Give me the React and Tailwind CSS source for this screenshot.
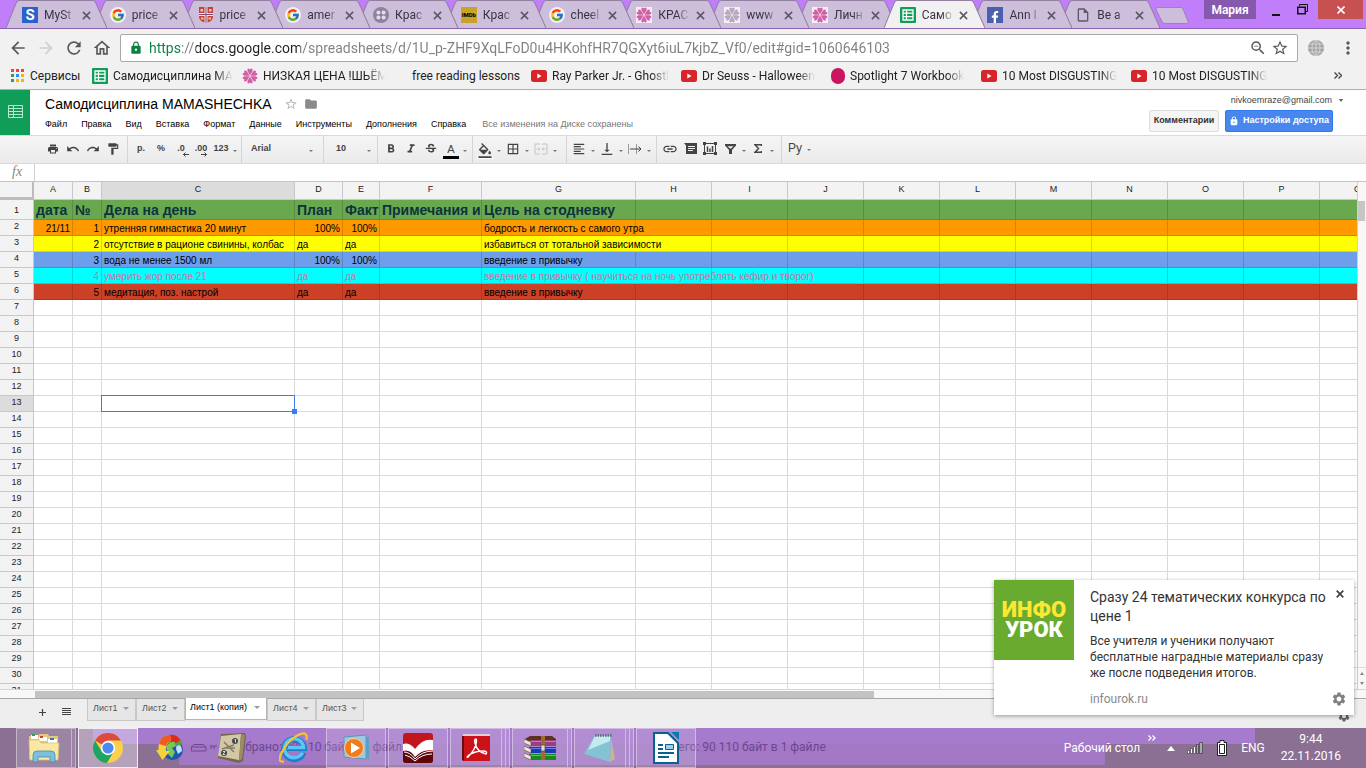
import React from 'react';
import clsx from 'clsx';
import { FcGoogle } from 'react-icons/fc';
import { FaFacebookF } from 'react-icons/fa';
import {
  MdArrowBack,
  MdArrowForward,
  MdBorderAll,
  MdFolder,
  MdFormatAlignLeft,
  MdFormatBold,
  MdFormatColorFill,
  MdFormatItalic,
  MdFormatPaint,
  MdLink,
  MdLock,
  MdMoreVert,
  MdOutlineHome,
  MdOutlineInsertDriveFile,
  MdPrint,
  MdRedo,
  MdRefresh,
  MdSettings,
  MdStarBorder,
  MdStrikethroughS,
  MdUndo,
  MdVerticalAlignBottom,
  MdZoomOut,
} from 'react-icons/md';

const uiFont = "font-['Roboto','Noto_Sans',sans-serif]";
const docFont = "font-['Liberation_Sans',Arial,sans-serif]";
const fade = '[mask-image:linear-gradient(to_right,black_60%,transparent)]';

function SheetsIcon() {
  return (
    <svg viewBox="0 0 16 16" className="size-4 shrink-0">
      <rect width="16" height="16" rx="1" fill="#0f9d58" />
      <path d="M3 3h10v10H3z M3.5 6.2h9 M3.5 9.6h9 M6.5 3.5v9" fill="none" stroke="#fff" strokeWidth="1.3" />
    </svg>
  );
}

function FlowerIcon({ color = '#d15fa5' }) {
  return (
    <svg viewBox="0 0 16 16" className="size-4 shrink-0">
      <rect width="16" height="16" fill="#f6eef6" />
      <g fill={color}>
        {[0, 60, 120, 180, 240, 300].map((angle) => (
          <path
            key={angle}
            d="M8 7.500 5.600 3.200Q4.800.6 6.700.4L8 1.600 9.300.4q1.900.2 1.100 2.800z"
            transform={`rotate(${angle} 8 8)`}
          />
        ))}
      </g>
    </svg>
  );
}

function YoutubeIcon() {
  return (
    <svg viewBox="0 0 16 12" className="h-3 w-4 shrink-0">
      <rect width="16" height="12" rx="2.500" fill="#d9252a" />
      <path d="M6.300 3.500 10.500 6l-4.200 2.500z" fill="#fff" />
    </svg>
  );
}

function SerpIcon() {
  return (
    <span className="flex size-4 shrink-0 items-center justify-center bg-[#2a62c9] text-[15px] font-bold leading-4 text-white">
      S
    </span>
  );
}

function CrestIcon() {
  return (
    <svg viewBox="0 0 16 16" className="size-4 shrink-0">
      <path d="M1 0h14v9c0 4-3 6-7 7-4-1-7-3-7-7z" fill="#c9403a" />
      <path d="M6.500 0h3v16h-3zM1 6h14v3H1z" fill="#f3e3dc" />
      <path d="M2.500 2h2.500v2.500H2.500zM11 2h2.500v2.500H11zM3 10.500h2.500v2H3zM10.500 10.500H13v2h-2.500z" fill="#f0c8b0" />
      <path d="M8 0v16M1 7.500h14" stroke="#7f4a7d" />
    </svg>
  );
}

function ReelIcon() {
  return (
    <svg viewBox="0 0 16 16" className="size-4 shrink-0">
      <circle cx="8" cy="8" r="8" fill="#8e82a0" />
      <g fill="#e5dcec">
        <circle cx="5.400" cy="5.400" r="2" />
        <circle cx="10.600" cy="5.400" r="2" />
        <circle cx="5.400" cy="10.600" r="2" />
        <circle cx="10.600" cy="10.600" r="2" />
      </g>
    </svg>
  );
}

function ImdbIcon() {
  return (
    <span className="flex size-4 shrink-0 items-center justify-center bg-[#c9a227] text-[6px] font-extrabold leading-4 text-black">
      IMDb
    </span>
  );
}

function GoogleIcon() {
  return (
    <span className="flex size-4 shrink-0 items-center justify-center rounded-full bg-[#f3eef8]">
      <FcGoogle className="size-3.5" />
    </span>
  );
}

function FacebookIcon() {
  return (
    <span className="flex size-4 shrink-0 items-end justify-end overflow-hidden bg-[#4a5fae] pr-0.5">
      <FaFacebookF className="size-3 text-white" />
    </span>
  );
}

const BROWSER_TABS = [
  { title: 'MySt', icon: <SerpIcon /> },
  { title: 'price', icon: <GoogleIcon /> },
  { title: 'price', icon: <CrestIcon /> },
  { title: 'amer', icon: <GoogleIcon /> },
  { title: 'Крас', icon: <ReelIcon /> },
  { title: 'Крас', icon: <ImdbIcon /> },
  { title: 'cheel', icon: <GoogleIcon /> },
  { title: 'КРАС', icon: <FlowerIcon /> },
  { title: 'www', icon: <FlowerIcon color="#b5a8bd" /> },
  { title: 'Личн', icon: <FlowerIcon /> },
  { title: 'Само', icon: <SheetsIcon />, active: true },
  { title: 'Ann I', icon: <FacebookIcon /> },
  { title: 'Be a', icon: <MdOutlineInsertDriveFile className="size-4 shrink-0 text-[#5f5866]" /> },
];

const TAB_LAYERS = ['z-[13]', 'z-[12]', 'z-[11]', 'z-[10]', 'z-[9]', 'z-[8]', 'z-[7]', 'z-[6]', 'z-[5]', 'z-[4]', 'z-20', 'z-[2]', 'z-[1]'];

function BrowserTab({ tab, layer }) {
  return (
    <div className={clsx('relative h-7 min-w-0 flex-1', layer)}>
      <svg viewBox="0 0 100 28" preserveAspectRatio="none" className="absolute left-0 top-0 h-7 w-[101px]">
        <path
          d="M0 28 10 3Q11 .5 13 .5H86Q88 .5 89 3L100 28"
          fill={tab.active ? '#f2f1f2' : '#cdbedb'}
          stroke="#93809f"
        />
      </svg>
      <div className="relative flex h-7 items-center pl-4 pt-0.5">
        {tab.icon}
        <span className={clsx('ml-1.5 w-8 overflow-hidden whitespace-nowrap text-xs leading-4 text-[#3a3342]', fade)}>
          {tab.title}
        </span>
        <button type="button" aria-label={`Закрыть ${tab.title}`} className="ml-1 flex size-3 items-center justify-center">
          <svg viewBox="0 0 10 10" className="size-[9px]">
            <path d="M1 1l8 8M9 1 1 9" stroke="#5d5666" strokeWidth="1.700" />
          </svg>
        </button>
      </div>
    </div>
  );
}

function TabStrip() {
  return (
    <div className="flex h-[29px] shrink-0 justify-between border-b border-[#8a62ab] bg-[#c17efb]">
      <div className="flex pl-1.5">
        <div className="flex w-[1141px]">
          {BROWSER_TABS.map((tab, i) => (
            <BrowserTab key={i} tab={tab} layer={TAB_LAYERS[i]} />
          ))}
        </div>
        <button type="button" aria-label="Новая вкладка" className="ml-2 flex w-9 shrink-0 items-start pt-[7px]">
          <svg viewBox="0 0 34 17" className="h-[17px] w-[34px]">
            <path d="M3 .5h23q1.500 0 2 1.500l5 12.500q.5 2-1.500 2H10q-2 0-3-2L1 2.500Q.5.5 3 .5z" fill="#cdbedb" stroke="#9d85b2" />
          </svg>
        </button>
      </div>
      <div className="flex h-[19px] items-stretch">
        <button type="button" className="mr-1.5 w-[52px] bg-[#8759ae] text-xs font-semibold leading-[18px] text-white">
          Мария
        </button>
        <button type="button" aria-label="Свернуть" className="flex w-7 items-center justify-center">
          <svg viewBox="0 0 8 12" className="mt-1 h-3 w-2"><path d="M0 9h8" stroke="#111" strokeWidth="2" /></svg>
        </button>
        <button type="button" aria-label="Развернуть" className="flex w-6 items-center justify-center">
          <svg viewBox="0 0 11 11" className="size-[11px]">
            <path d="M2.500 2V.5h8v7H9" fill="none" stroke="#111" />
            <path d="M.75 3.250h7.500v6.500H.75z" fill="none" stroke="#111" strokeWidth="1.500" />
          </svg>
        </button>
        <button type="button" aria-label="Закрыть" className="ml-1 mr-[3px] flex w-[45px] items-center justify-center bg-[#c75050]">
          <svg viewBox="0 0 8 8" className="size-2"><path d="M.5.5l7 7M7.500.5l-7 7" stroke="#fff" strokeWidth="1.600" /></svg>
        </button>
      </div>
    </div>
  );
}

function AddressBar() {
  return (
    <div className="flex h-[33px] shrink-0 items-end bg-[#f2f1f2] pl-2 text-[#595959]">
      <div className="flex h-7 w-28 items-center gap-2">
        <button type="button" aria-label="Назад"><MdArrowBack className="size-5" /></button>
        <button type="button" aria-label="Вперёд"><MdArrowForward className="size-5 text-[#d0d0d0]" /></button>
        <button type="button" aria-label="Обновить"><MdRefresh className="size-5" /></button>
        <button type="button" aria-label="Главная"><MdOutlineHome className="size-5" /></button>
      </div>
      <div className="flex h-7 min-w-0 flex-1 items-center rounded-xs border border-[#a9a9a9] bg-white px-2">
        <MdLock className="size-3.5 shrink-0 text-[#0b8043]" />
        <input
          aria-label="Адресная строка"
          defaultValue="https://docs.google.com/spreadsheets/d/1U_p-ZHF9XqLFoD0u4HKohfHR7QGXyt6iuL7kjbZ_Vf0/edit#gid=1060646103"
          className="ml-1.5 min-w-0 flex-1 bg-[linear-gradient(to_right,#0b8043_32px,#808080_32px,#808080_47px,#222_47px,#222_151px,#808080_151px)] bg-clip-text text-sm text-transparent outline-none"
        />
        <button type="button" aria-label="Масштаб"><MdZoomOut className="size-[18px]" /></button>
        <button type="button" aria-label="В закладки" className="ml-1"><MdStarBorder className="size-[18px]" /></button>
      </div>
      <button type="button" aria-label="Расширение" className="ml-2.5 flex h-7 items-center">
        <svg viewBox="0 0 16 16" className="size-4">
          <circle cx="8" cy="8" r="8" fill="#a3a3a3" />
          <path d="M8 0v16M0 8h16M1.500 4h13M1.500 12h13" stroke="#d5d5d5" fill="none" />
          <ellipse cx="8" cy="8" rx="4" ry="7.500" stroke="#d5d5d5" fill="none" />
        </svg>
      </button>
      <button type="button" aria-label="Меню" className="ml-3.5 mr-2 flex h-7 items-center"><MdMoreVert className="size-5" /></button>
    </div>
  );
}

function AppsIcon() {
  const colors = ['#e8453c', '#e8453c', '#e8453c', '#2c9f5a', '#2f8ef0', '#f5b400', '#2c9f5a', '#f5b400', '#f5b400'];
  return (
    <svg viewBox="0 0 13 13" className="mx-px size-[13px] shrink-0">
      {colors.map((color, i) => (
        <rect key={i} x={(i % 3) * 5} y={Math.floor(i / 3) * 5} width="3" height="3" fill={color} />
      ))}
    </svg>
  );
}

const BOOKMARKS = [
  { label: 'Сервисы', width: 'w-[82px]', icon: <AppsIcon /> },
  { label: 'Самодисциплина MA', width: 'w-[150px]', icon: <SheetsIcon />, long: true },
  { label: 'НИЗКАЯ ЦЕНА !ШЬЁМ', width: 'w-[151px]', icon: <FlowerIcon />, long: true },
  { label: 'free reading lessons', width: 'w-[138px]', icon: <span className="w-3.5 shrink-0" /> },
  { label: 'Ray Parker Jr. - Ghostl', width: 'w-[150px]', icon: <YoutubeIcon />, long: true },
  { label: 'Dr Seuss - Halloween', width: 'w-[150px]', icon: <YoutubeIcon />, long: true },
  { label: 'Spotlight 7 Workbook', width: 'w-[150px]', icon: <span className="h-4 w-3.5 shrink-0 rounded-full bg-[#c9165f]" />, long: true },
  { label: '10 Most DISGUSTING', width: 'w-[150px]', icon: <YoutubeIcon />, long: true },
  { label: '10 Most DISGUSTING', width: 'w-[150px]', icon: <YoutubeIcon />, long: true },
];

function BookmarksBar() {
  return (
    <nav className="flex h-7 shrink-0 items-center border-b border-[#b0afb0] bg-[#f2f1f2] pl-2.5 text-xs text-[#222]">
      {BOOKMARKS.map((item, i) => (
        <a key={i} href="#" className={clsx('flex shrink-0 items-center gap-[5px] pr-2', item.width)}>
          {item.icon}
          <span
            className={clsx(
              'overflow-hidden whitespace-nowrap',
              item.long && '[mask-image:linear-gradient(to_right,black_85%,transparent)]',
            )}
          >
            {item.label}
          </span>
        </a>
      ))}
      <button type="button" aria-label="Другие закладки" className="ml-auto mr-6">
        <svg viewBox="0 0 8 7" className="h-[7px] w-2">
          <path d="M.5.5l3 3-3 3M4.500.5l3 3-3 3" fill="none" stroke="#444" strokeWidth="1.400" />
        </svg>
      </button>
    </nav>
  );
}

const DOC_MENU = ['Файл', 'Правка', 'Вид', 'Вставка', 'Формат', 'Данные', 'Инструменты', 'Дополнения', 'Справка'];

function DocHeader() {
  return (
    <header className="flex h-[45px] shrink-0 bg-white">
      <a href="#" aria-label="Таблицы" className="flex w-[30px] justify-center bg-[#0f9d58] pt-[15px]">
        <svg viewBox="0 0 15 13" className="h-[13px] w-[15px]">
          <path d="M.5.5h14v12H.5zM.5 3.500h14M.5 6.500h14M.5 9.500h14M5.500.5v12" fill="none" stroke="#bfe5d0" />
        </svg>
      </a>
      <div className="flex-1 pl-[15px] pt-[5px]">
        <div className="flex h-[18px] items-center">
          <h1 className="text-sm leading-4 text-black">Самодисциплина MAMASHECHKA</h1>
          <button type="button" aria-label="Пометить" className="ml-3"><MdStarBorder className="size-3.5 text-[#b8b8b8]" /></button>
          <button type="button" aria-label="Папка" className="ml-1.5"><MdFolder className="size-3.5 text-[#8a8a8a]" /></button>
        </div>
        <div className="mt-[5px] flex items-center text-[9px] leading-3 text-black">
          <nav className="flex gap-3.5">
            {DOC_MENU.map((label) => <button key={label} type="button">{label}</button>)}
          </nav>
          <span className="ml-4 text-[#777]">Все изменения на Диске сохранены</span>
        </div>
      </div>
      <div className="pr-[22px] text-[9px]">
        <button type="button" className="ml-auto flex h-5 items-center gap-1.5 leading-3 text-[#444]">
          nivkoemraze@gmail.com
          <svg viewBox="0 0 6 4" className="h-[3px] w-1.5"><path d="M0 0h6L3 4z" fill="#666" /></svg>
        </button>
        <div className="mr-[11px] flex gap-1.5 font-bold">
          <button type="button" className="h-[22px] w-[70px] whitespace-nowrap rounded-xs border border-[#dcdcdc] bg-[#f5f5f5] text-[#333]">
            Комментарии
          </button>
          <button type="button" className="flex h-[22px] w-[108px] items-center justify-center gap-1 whitespace-nowrap rounded-xs border border-[#3079ed] bg-[#4887ef] text-white">
            <MdLock className="size-[10px]" />
            Настройки доступа
          </button>
        </div>
      </div>
    </header>
  );
}

function Caret() {
  return (
    <span className="flex w-2 shrink-0 justify-center pt-1">
      <svg viewBox="0 0 4 2" className="h-0.5 w-1"><path d="M0 0h4L2 2z" fill="#777" /></svg>
    </span>
  );
}

function Tool({ label, caret, faded, children }) {
  return (
    <button
      type="button"
      aria-label={label}
      className={clsx('flex h-full shrink-0 items-center', faded ? 'text-[#c4c4c4]' : 'text-[#444]')}
    >
      <span className="flex w-5 items-center justify-center">{children}</span>
      {caret && <Caret />}
    </button>
  );
}

function ToolGroup({ className, children }) {
  return <div className={clsx('flex h-full shrink-0 items-center border-r border-[#d5d5d5] pb-0.5', className)}>{children}</div>;
}

function Toolbar() {
  return (
    <div className="flex h-[29px] shrink-0 items-center border-y border-[#dadada] bg-[linear-gradient(to_bottom,#f5f5f5,#ebebeb)] text-[9px] font-bold text-[#444]">
      <ToolGroup className="w-32 pl-[43px]">
        <Tool label="Печать"><MdPrint className="size-3" /></Tool>
        <Tool label="Отменить"><MdUndo className="size-3.5" /></Tool>
        <Tool label="Повторить"><MdRedo className="size-3.5" /></Tool>
        <Tool label="Копировать форматирование"><MdFormatPaint className="size-3.5" /></Tool>
      </ToolGroup>
      <ToolGroup className="w-[114px] pl-[3px]">
        <Tool label="Денежный формат">р.</Tool>
        <Tool label="Процентный формат">%</Tool>
        <Tool label="Меньше знаков">
          <span className="relative">.0
            <svg viewBox="0 0 6 5" className="absolute -right-1 top-2.5 h-[5px] w-1.5"><path d="M0 2.500h6M2.500.5l-2 2 2 2" stroke="#444" fill="none" /></svg>
          </span>
        </Tool>
        <Tool label="Больше знаков">
          <span className="relative">.00
            <svg viewBox="0 0 6 5" className="absolute right-0 top-2.5 h-[5px] w-1.5"><path d="M0 2.500h6M3.500.5l2 2-2 2" stroke="#444" fill="none" /></svg>
          </span>
        </Tool>
        <Tool label="Другие форматы" caret>123</Tool>
      </ToolGroup>
      <ToolGroup className="w-[82px] pl-[9px] pr-2">
        <select aria-label="Шрифт" className="h-full flex-1 appearance-none outline-none"><option>Arial</option></select>
        <Caret />
      </ToolGroup>
      <ToolGroup className="w-[54px] pl-3 pr-1">
        <select aria-label="Размер шрифта" className="h-full flex-1 appearance-none outline-none"><option>10</option></select>
        <Caret />
      </ToolGroup>
      <ToolGroup className="w-[95px] pl-[3px]">
        <Tool label="Полужирный"><MdFormatBold className="size-3.5" /></Tool>
        <Tool label="Курсив"><MdFormatItalic className="size-3.5" /></Tool>
        <Tool label="Зачеркнутый"><MdStrikethroughS className="size-3.5" /></Tool>
        <Tool label="Цвет текста" caret>
          <span className="mt-1 w-4 border-b-3 border-black text-[11px] font-normal leading-[14px]">A</span>
        </Tool>
      </ToolGroup>
      <ToolGroup className="w-[94px] pl-0.5">
        <Tool label="Цвет заливки" caret>
          <span className="mt-1 border-b-3 border-white"><MdFormatColorFill className="-mb-0.5 size-4" viewBox="0 0 24 21" /></span>
        </Tool>
        <Tool label="Границы" caret><MdBorderAll className="size-3.5" /></Tool>
        <Tool label="Объединить ячейки" caret faded>
          <svg viewBox="0 0 14 12" className="h-3 w-3.5">
            <path d="M6 1H1v10h5M8 1h5v10H8M2.500 6H6M4.500 4.500 6 6 4.500 7.500M11.500 6H8M9.500 4.500 8 6l1.500 1.500" fill="none" stroke="currentColor" />
          </svg>
        </Tool>
      </ToolGroup>
      <ToolGroup className="w-[90px] pl-0.5">
        <Tool label="Выравнивание" caret><MdFormatAlignLeft className="size-3.5" /></Tool>
        <Tool label="Вертикальное выравнивание" caret><MdVerticalAlignBottom className="size-4" /></Tool>
        <Tool label="Перенос текста" caret>
          <svg viewBox="0 0 14 10" className="h-2.5 w-3.5">
            <path d="M.5 0v10M8.500 0v10" stroke="#999" />
            <path d="M2 5h11M10.500 2.500 13 5l-2.500 2.500" fill="none" stroke="#444" />
          </svg>
        </Tool>
      </ToolGroup>
      <ToolGroup className="w-[125px] pl-[3px]">
        <Tool label="Вставить ссылку"><MdLink className="size-4" /></Tool>
        <Tool label="Комментарий">
          <svg viewBox="0 0 13 11" className="h-[11px] w-[13px]">
            <path d="M0 0h13v11H2V2.500z" fill="#444" />
            <path d="M4 3.500h7M4 5.500h7M4 7.500h5" stroke="#f0f0f0" />
          </svg>
        </Tool>
        <Tool label="Диаграмма">
          <svg viewBox="0 0 14 13" className="h-[13px] w-3.5">
            <path d="M1.500 1.500h11v10h-11z" fill="none" stroke="#444" />
            <path d="M0 0h3v3H0zM11 0h3v3h-3zM0 10h3v3H0zM11 10h3v3h-3z" fill="#444" />
            <path d="M4.500 4.500v5.500M7 6.500v3.500M9.500 4v6" stroke="#444" strokeWidth="1.500" />
          </svg>
        </Tool>
        <Tool label="Фильтр" caret>
          <svg viewBox="0 0 11 10" className="h-2.5 w-[11px]">
            <path d="M0 0h11v1.500L7 6v4H4V6L0 1.500zM2.500 2.300h6L6 4.500H5z" fill="#444" fillRule="evenodd" />
          </svg>
        </Tool>
        <Tool label="Функции" caret>
          <svg viewBox="0 0 8 9" className="h-[9px] w-2">
            <path d="M7.500 2V.8H1L4.500 4.500 1 8.200h6.500V7" fill="none" stroke="#444" strokeWidth="1.500" />
          </svg>
        </Tool>
      </ToolGroup>
      <div className="flex h-full items-center pb-1 pl-[3px]">
        <button type="button" aria-label="Способ ввода" className="flex h-full items-center text-xs font-normal">
          <span className="w-5 text-center">Ру</span>
          <Caret />
        </button>
      </div>
    </div>
  );
}

function FormulaBar() {
  return (
    <div className="flex h-[18px] shrink-0 border-b border-[#c4c4c4] bg-white">
      <label htmlFor="formula" className="w-[35px] border-r border-[#d0d0d0] pl-3 font-['Liberation_Serif',serif] text-sm italic leading-4 text-[#888]">
        fx
      </label>
      <input id="formula" className="min-w-0 flex-1 px-1 text-[10px] outline-none" />
    </div>
  );
}

const COLUMNS = [
  { name: 'A', width: 'w-[39px]' },
  { name: 'B', width: 'w-[29px]' },
  { name: 'C', width: 'w-[193px]' },
  { name: 'D', width: 'w-12' },
  { name: 'E', width: 'w-[37px]' },
  { name: 'F', width: 'w-[102px]' },
  { name: 'G', width: 'w-[154px]' },
  ...'HIJKLMNOPQ'.split('').map((name) => ({ name, width: 'w-[76px]' })),
];

const ROWS = {
  1: {
    style: 'bg-[#6aa84f] text-[#0c343d] text-sm font-bold leading-[18px]',
    cells: ['дата', '№', 'Дела на день', 'План', 'Факт', 'Примечания и', 'Цель на стодневку'],
  },
  2: {
    style: 'bg-[#ff9900]',
    cells: ['21/11', '1', 'утренняя гимнастика 20 минут', '100%', '100%', '', 'бодрость и легкость с самого утра'],
  },
  3: {
    style: 'bg-[#ffff00]',
    cells: ['', '2', 'отсутствие в рационе свинины, колбас', 'да', 'да', '', 'избавиться от тотальной зависимости'],
    spills: true,
  },
  4: {
    style: 'bg-[#6d9eeb]',
    cells: ['', '3', 'вода не менее 1500 мл', '100%', '100%', '', 'введение в привычку'],
  },
  5: {
    style: 'bg-[#00ffff] text-[#c27ba0]',
    cells: ['', '4', 'умерить жор после 21', 'да', 'да', '', 'введение в привычку ( научиться на ночь употреблять кефир и творог)'],
    spills: true,
  },
  6: {
    style: 'bg-[#cc4125]',
    cells: ['', '5', 'медитация, поз. настрой', 'да', 'да', '', 'введение в привычку'],
  },
};

const SELECTED_ROW = 13;
const SELECTED_COLUMN = 'C';

// Числа, даты и проценты прижимаются вправо, как в самой таблице.
const isNumeric = (value) => /^\d[\d/]*%?$/.test(value);

function SheetRow({ number }) {
  const row = ROWS[number];

  return (
    <tr className={clsx(number === 1 ? 'h-5' : 'h-4', row ? row.style : 'bg-white')}>
      <th
        scope="row"
        className={clsx(
          'border-b border-r border-[#c8c8c8] p-0 text-center text-[9px] font-normal text-[#222]',
          number === 1 ? 'leading-[18px]' : 'align-top leading-[13px]',
          number === SELECTED_ROW ? 'bg-[#dcdcdc]' : 'bg-[#f3f3f3]',
        )}
      >
        {number}
      </th>
      {COLUMNS.map((column, i) => {
        const value = row?.cells[i] ?? '';
        const selected = number === SELECTED_ROW && column.name === SELECTED_COLUMN;
        return (
          <td
            key={column.name}
            className={clsx(
              'whitespace-nowrap border-b border-r border-b-black/15 px-0.5 py-0 align-bottom',
              row?.spills && column.name === 'G' ? 'border-r-transparent' : 'border-r-black/15',
              isNumeric(value) && 'text-right',
              column.name === 'F' && 'overflow-hidden',
              selected && 'relative',
            )}
          >
            {value}
            {selected && (
              <span className="absolute -bottom-px -left-px -right-px -top-px border border-[#3b7ded]">
                <span className="absolute -bottom-[3px] -right-[3px] size-[5px] bg-[#3b7ded]" />
              </span>
            )}
          </td>
        );
      })}
    </tr>
  );
}

function Sheet() {
  return (
    <div className="flex min-h-0 flex-1 bg-[#f5f5f5]">
      <div className="min-w-0 flex-1 overflow-hidden border-r border-[#d0d0d0]">
        <table className="w-[1396px] table-fixed border-separate border-spacing-0 text-[10px] leading-3 text-black">
          <thead>
            <tr className="h-[18px]">
              <th aria-label="Выделить всё" className="w-[34px] border-b-3 border-r-2 border-[#bcbcbc] bg-[#f3f3f3] p-0" />
              {COLUMNS.map((column) => (
                <th
                  key={column.name}
                  scope="col"
                  className={clsx(
                    'border-b border-r border-[#c8c8c8] p-0 align-top text-[9px] font-normal leading-[15px] text-[#222]',
                    column.width,
                    column.name === SELECTED_COLUMN ? 'bg-[#dcdcdc]' : 'bg-[#f3f3f3]',
                  )}
                >
                  {column.name}
                </th>
              ))}
            </tr>
          </thead>
          <tbody>
            {Array.from({ length: 31 }, (_, i) => <SheetRow key={i} number={i + 1} />)}
          </tbody>
        </table>
      </div>
      <div className="flex w-2 shrink-0 flex-col bg-[#f8f8f8] pt-[19px]">
        <div className="h-5 w-[7px] bg-[#c6c6c6]" />
        <div className="mt-auto flex h-[22px] flex-col items-center justify-around border-t border-[#ddd] text-[#888]">
          <svg viewBox="0 0 4 3" className="h-[3px] w-1"><path d="M0 3h4L2 0z" fill="currentColor" /></svg>
          <svg viewBox="0 0 4 3" className="h-[3px] w-1"><path d="M0 0h4L2 3z" fill="currentColor" /></svg>
        </div>
      </div>
    </div>
  );
}

const SHEET_TABS = [
  { label: 'Лист1', width: 'w-[49px]' },
  { label: 'Лист2', width: 'w-[49px]' },
  { label: 'Лист1 (копия)', width: 'w-[82px]', active: true },
  { label: 'Лист4', width: 'w-[49px]' },
  { label: 'Лист3', width: 'w-12' },
];

function SheetFooter() {
  return (
    <footer className="shrink-0">
      <div className="flex h-[9px] items-center border-t border-[#d5d5d5] bg-[#f8f8f8] pl-[35px]">
        <div className="h-[7px] w-[839px] bg-[#c3c3c3]" />
      </div>
      <div className="flex h-[30px] border-t border-[#a8a8a8] bg-[#eeeeee] pl-9">
        <button type="button" aria-label="Добавить лист" className="mt-[7px] flex size-3 items-center justify-center">
          <svg viewBox="0 0 7 7" className="size-[7px]"><path d="M3.500 0v7M0 3.500h7" stroke="#444" strokeWidth="1.200" /></svg>
        </button>
        <button type="button" aria-label="Все листы" className="ml-3 mt-[7px] flex size-3 items-center justify-center">
          <svg viewBox="0 0 9 8" className="h-2 w-[9px]"><path d="M0 .5h9M0 2.500h9M0 4.500h9M0 6.500h9" stroke="#444" /></svg>
        </button>
        <div className="ml-[15px] flex items-start">
          {SHEET_TABS.map((tab) => (
            <button
              key={tab.label}
              type="button"
              className={clsx(
                'flex items-center justify-between whitespace-nowrap border border-t-0 pr-1.5 text-[9px]',
                tab.width,
                tab.active
                  ? '-mt-px h-[22px] border-[#b5b5b5] bg-white pb-0.5 pl-1 text-black shadow-xs'
                  : 'h-[22px] border-[#c8c8c8] bg-[#e6e6e6] pb-0.5 pl-[5px] text-[#555]',
              )}
            >
              {tab.label}
              <svg viewBox="0 0 6 3" className="h-[3px] w-1.5"><path d="M0 0h6L3 3z" fill="#999" /></svg>
            </button>
          ))}
        </div>
        <button type="button" aria-label="Настройки" className="ml-auto mr-[15px] mt-2.5 h-3.5"><MdSettings className="size-3.5 text-[#666]" /></button>
      </div>
    </footer>
  );
}

function Notification() {
  return (
    <aside className="absolute bottom-[53px] right-3 flex w-[360px] bg-white pb-2 shadow-[0_1px_4px_rgba(0,0,0,0.35)]">
      <div className="flex size-20 shrink-0 flex-col items-center justify-center bg-[#68ab2e] font-['Roboto',sans-serif] text-[22px] font-black leading-5">
        <span className="text-[#fbe734]">ИНФО</span>
        <span className="text-white">УРОК</span>
      </div>
      <div className="flex-1 pl-4 pt-2">
        <h2 className="whitespace-pre-line text-sm leading-[19px] text-[#333]">{'Сразу 24 тематических конкурса по\nцене 1'}</h2>
        <p className="mt-[7px] whitespace-pre-line text-xs leading-4 text-[#333]">
          {'Все учителя и ученики получают\nбесплатные наградные материалы сразу\nже после подведения итогов.'}
        </p>
        <p className="mt-2.5 text-xs leading-4 text-[#8a8a8a]">infourok.ru</p>
      </div>
      <button type="button" aria-label="Закрыть уведомление" className="absolute right-2.5 top-2.5 size-2">
        <svg viewBox="0 0 8 8" className="size-2"><path d="M.7.7l6.600 6.600M7.300.7.7 7.300" stroke="#444" strokeWidth="1.700" /></svg>
      </button>
      <button type="button" aria-label="Настройки уведомлений" className="absolute bottom-2 right-[7px]"><MdSettings className="size-4 text-[#808080]" /></button>
    </aside>
  );
}

function ExplorerIcon() {
  return (
    <svg viewBox="0 0 32 30" className="h-[30px] w-8">
      <path d="M1 3h9l1-2h9l1 2h9v23H1z" fill="#e3c877" />
      <path d="M3 2h7v4H3zM11 4h8v4h-8zM20 6h9v4h-9z" fill="#fff" />
      <path d="M4 1h3v2H4z" fill="#29a34a" />
      <path d="M12 3h3v2h-3z" fill="#d5402c" />
      <path d="M22 5h4v2h-4z" fill="#2a7bd0" />
      <path d="M1 7h10l2 3h18l-1 17H2z" fill="#f8e8a4" stroke="#d8bd6c" strokeWidth=".7" />
      <path d="M5 29v-7q0-4 4-4h14q4 0 4 4v7h-5v-5H10v5z" fill="#7cc0dd" stroke="#498aab" strokeWidth=".8" />
    </svg>
  );
}

function ChromeIcon() {
  return (
    <svg viewBox="0 0 30 30" className="size-[30px]">
      <circle cx="15" cy="15" r="15" fill="#fbd04a" />
      <path d="M15 15 2 7.500A15 15 0 0 1 28 7.500H15z" fill="#dc4b3e" />
      <path d="M2 7.500A15 15 0 0 0 14 30l7-12-6-3-6.500 3z" fill="#1fa463" />
      <circle cx="15" cy="15" r="7.200" fill="#fff" />
      <circle cx="15" cy="15" r="5.600" fill="#4a8af4" />
    </svg>
  );
}

function DownloaderIcon() {
  return (
    <svg viewBox="0 0 28 28" className="size-7">
      <circle cx="16.500" cy="15.500" r="10.500" fill="#1b58b5" />
      <path d="M10 13q3-6 9-5l1 4-4 2 3 4-3 6-4-4z" fill="#7cc653" />
      <path d="M21 9q5 2 5 8l-4 3-2-5z" fill="#c4e0f6" />
      <path d="M14 1q9 0 12.500 9l-5 2Q19 7 14 7z" fill="#4da638" />
      <path d="M12 1q9-1 12.500 5l-4.500 3Q17 6 13 7z" fill="#dd2b1e" />
      <path d="M14 1Q2 2 2.500 16H0l6.500 10L14 17h-4q-1-7 5-10z" fill="#f7d13c" />
      <path d="M14 1Q5 1 3 10l7 2q1-4 5-5z" fill="#ee5a22" />
    </svg>
  );
}

function MapIcon() {
  return (
    <svg viewBox="0 0 30 30" className="size-[30px]">
      <path d="M4 1 28 0l1 3-3 25-4 2L1 25z" fill="#75674c" />
      <path d="M4 3 24 1l-2 26L1 23z" fill="#d3c8a6" />
      <path d="M24 1l4 1-3 24-3 2z" fill="#9c8b64" />
      <path d="M5 16 17 12M7 9l10 10M9 15l9 0" stroke="#847c68" strokeWidth="1.600" />
      <circle cx="18" cy="8" r="3" fill="#3f4a52" />
      <circle cx="7" cy="20" r="3" fill="#3f4a52" />
      <path d="M17.500 6.500h1v3M6 18.500h2l-2 3h2" fill="none" stroke="#fff" strokeWidth=".8" />
    </svg>
  );
}

function ExplorerEIcon() {
  return (
    <svg viewBox="0 0 30 32" className="h-8 w-[30px]">
      <path d="M24.500 20.500A10 10 0 1 1 25 16H9" fill="none" stroke="#1c7fc8" strokeWidth="6" />
      <path d="M23.500 20.500A9.500 9.500 0 1 1 24.500 15.500H9" fill="none" stroke="#5fc3f6" strokeWidth="3.500" />
      <path d="M5 29.500Q-2 31 2 22 8 9 19 3 29-2 27.500 8" fill="none" stroke="#f4c52c" strokeWidth="2.200" />
    </svg>
  );
}

function PlayerIcon() {
  return (
    <svg viewBox="0 0 28 28" className="size-7">
      <path d="M2 3 24 1v24L2 23z" fill="#9dc9e4" stroke="#5d92b4" />
      <path d="M24 3h3v22l-3-1z" fill="#5f9fc6" />
      <circle cx="12" cy="14" r="9.500" fill="#f07c1c" stroke="#fbd1a0" />
      <path d="M9 8.500 18 14l-9 5.500z" fill="#fff" />
    </svg>
  );
}

function BookIcon() {
  return (
    <svg viewBox="0 0 30 30" className="size-[30px]">
      <rect width="30" height="30" rx="3" fill="#c0161c" />
      <path d="M0 18h30v9q0 3-3 3H3q-3 0-3-3z" fill="#5f070a" />
      <path d="M0 11q6-2 12 5Q20 5 30 7v10Q19 16 12 24 7 16 0 18z" fill="#fff" />
      <path d="M1 19q6 0 11 7 7-8 18-8M2 22q5 1 10 6 7-7 17-7" fill="none" stroke="#fff" />
    </svg>
  );
}

function PdfIcon() {
  return (
    <svg viewBox="0 0 30 28" className="h-7 w-[30px]">
      <path d="M2 0h27v3H2z" fill="#d9d3d8" />
      <path d="M1 2h28v25H3l-2-1z" fill="#cc1218" />
      <path d="M1 2h2v25l-2-1z" fill="#6c0b10" />
      <path d="M15 5q-2 0-1 4 2 9 11 11 2-3-3-3-8 0-14 4-3 3-1 2Q15 15 15.500 7q0-2-.5-2z" fill="none" stroke="#fff" strokeWidth="1.500" />
    </svg>
  );
}

function ArchiveIcon() {
  return (
    <svg viewBox="0 0 32 26" className="h-[26px] w-8">
      <path d="M1 4 6 1h22l4 3v4H5z" fill="#5a3320" />
      <path d="M5 5h27v6H7z" fill="#9a3f80" />
      <path d="M5 12h27v6H7z" fill="#2038b8" />
      <path d="M5 19h27v6H7z" fill="#168a1f" />
      <path d="M7 6.500h25" stroke="#c679b2" />
      <path d="M7 13.500h25" stroke="#5f7cf0" />
      <path d="M7 20.500h25" stroke="#41d23f" />
      <path d="M0 4l7 3v4L0 8zM0 11l7 3v4l-7-3zM0 18l7 3v4l-7-3z" fill="#eee6dd" stroke="#533" strokeWidth=".5" />
      <path d="M17 1h4v24h-4z" fill="#a06a35" />
      <path d="M17 10h4v6h-4z" fill="#ddd" stroke="#444" strokeWidth=".7" />
    </svg>
  );
}

function NotepadIcon() {
  return (
    <svg viewBox="0 0 32 30" className="h-[30px] w-8">
      <path d="m27 5 4 21-5 3z" fill="#c3b795" />
      <path d="M11 2h16l-1 27L0 21z" fill="#83c3d3" />
      <path d="M11 3 4 17l22-9 .5-5z" fill="#c5e9f0" />
      <path d="M11 2.500h17" stroke="#5a6d70" strokeWidth="2.500" strokeDasharray="1.500 1" />
    </svg>
  );
}

function WriterIcon() {
  return (
    <svg viewBox="0 0 26 32" className="h-8 w-[26px]">
      <path d="M1 1h14l10 10v20H1z" fill="#fff" stroke="#07628f" strokeWidth="2" />
      <path d="M18 0h8v8z" fill="#0a7bb0" />
      <path d="M5 13h5M5 17h5M5 21h16M5 25h11" stroke="#07628f" strokeWidth="1.800" />
      <path d="M12.500 12.500h8v5h-8z" fill="#9dd0e8" stroke="#07628f" />
    </svg>
  );
}

const TASKS = [
  { name: 'Проводник', icon: <ExplorerIcon />, open: true, stack: 1 },
  { name: 'Google Chrome', icon: <ChromeIcon />, open: true, active: true, stack: 0 },
  { name: 'Загрузчик', icon: <DownloaderIcon /> },
  { name: 'Карта', icon: <MapIcon /> },
  { name: 'Internet Explorer', icon: <ExplorerEIcon /> },
  { name: 'Проигрыватель', icon: <PlayerIcon />, open: true, stack: 0 },
  { name: 'Книга', icon: <BookIcon />, open: true, stack: 0 },
  { name: 'Adobe Reader', icon: <PdfIcon />, open: true, stack: 2 },
  { name: 'WinRAR', icon: <ArchiveIcon />, open: true, stack: 1 },
  { name: 'Блокнот', icon: <NotepadIcon />, open: true, stack: 2 },
  { name: 'Writer', icon: <WriterIcon />, open: true, stack: 0 },
];

function TaskButton({ task }) {
  const frame = task.open && (task.active ? 'border border-white/80 bg-white/35' : 'border border-white/40 bg-white/15');
  return (
    <button type="button" aria-label={task.name} className="flex h-10 w-[60px]">
      <span className={clsx('flex h-full flex-1 items-center justify-center', frame)}>{task.icon}</span>
      {Array.from({ length: task.stack ?? 0 }, (_, i) => (
        <span key={i} className="h-full w-1 border border-l-0 border-white/40 bg-white/15" />
      ))}
    </button>
  );
}

function Taskbar() {
  return (
    <div className="relative flex h-10 shrink-0 items-stretch bg-[#8b7094] text-[13px] text-white">
      {/* Полупрозрачные окна, просвечивающие сквозь панель задач */}
      <div className="absolute left-[93px] right-[111px] top-0 h-4 bg-[#a67acc]" />
      <div className="absolute left-[179px] right-[261px] top-4 h-[21px] bg-[#a278c4]" />
      <span className="absolute left-[236px] top-[11px] text-xs leading-4 text-[#6d4693]">ыбрано: 90 110 байт в 1 файле</span>
      <span className="absolute left-[672px] top-[11px] text-xs leading-4 text-[#6d4693]">сего: 90 110 байт в 1 файле</span>
      <svg viewBox="0 0 26 8" className="absolute left-[191px] top-4 h-2 w-[26px]">
        <path d="M.5 3 3 .5h9L15 3v4H.5zM.5 3H15M19 2h7M20 2v3M23 2v3" fill="none" stroke="#6d4693" />
      </svg>
      <div className="relative flex gap-0.5 pl-4">
        {TASKS.map((task) => <TaskButton key={task.name} task={task} />)}
      </div>
      <div className="relative ml-auto flex items-center text-xs">
        <span>Рабочий стол</span>
        <button type="button" aria-label="Показать ещё" className="mb-5 ml-2">
          <svg viewBox="0 0 8 6" className="h-1.5 w-2"><path d="M.5.5 3 3 .5 5.500M4.500.5 7 3 4.500 5.500" fill="none" stroke="#fff" strokeWidth="1.300" /></svg>
        </button>
        <button type="button" aria-label="Скрытые значки" className="ml-[11px]">
          <svg viewBox="0 0 8 5" className="h-[5px] w-2"><path d="M0 5h8L4 0z" fill="#fff" /></svg>
        </button>
        <svg viewBox="0 0 16 12" className="ml-3 h-3 w-4">
          <path d="M.5 8.500h2v3h-2zM3.500 6.500h2v5h-2zM6.500 4.500h2v7h-2z" fill="#fff" stroke="#333" strokeWidth=".6" />
          <path d="M9.500 2.500h2v9h-2zM12.500.5h3v11h-3z" fill="#aaa" stroke="#333" strokeWidth=".6" />
        </svg>
        <svg viewBox="0 0 10 16" className="ml-3.5 h-4 w-2.5">
          <path d="M3 .5h4v2h2.500v13h-9v-13H3z" fill="#fff" stroke="#222" />
          <path d="M2.500 4.500h5v9h-5z" fill="#fff" stroke="#222" />
        </svg>
        <span className="ml-3.5">ENG</span>
        <time className="ml-4 mr-[25px] text-center leading-[17px]">
          9:44
          <br />
          22.11.2016
        </time>
      </div>
    </div>
  );
}

export default function App() {
  return (
    <div className={clsx('relative flex h-screen flex-col overflow-hidden', uiFont)}>
      <TabStrip />
      <AddressBar />
      <BookmarksBar />
      <main className={clsx('flex min-h-0 flex-1 flex-col', docFont)}>
        <DocHeader />
        <Toolbar />
        <FormulaBar />
        <Sheet />
        <SheetFooter />
      </main>
      <Taskbar />
      <Notification />
    </div>
  );
}
